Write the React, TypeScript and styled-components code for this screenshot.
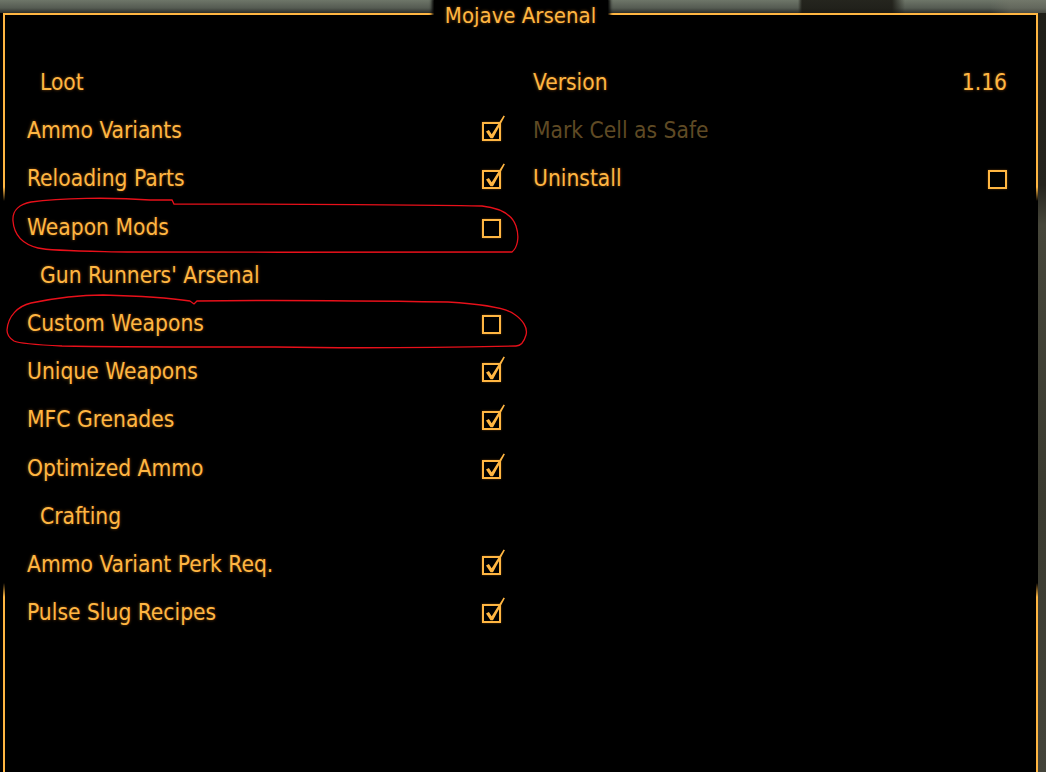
import React from 'react';
import styled, { createGlobalStyle } from 'styled-components';

const AMBER = '#ffb642';
const DIM = '#5f4a24';

const GlobalStyle = createGlobalStyle`
  html, body {
    margin: 0;
    padding: 0;
    background: #000;
  }
`;

const Page = styled.div`
  position: relative;
  width: 1046px;
  height: 772px;
  overflow: hidden;
  display: flex;
  flex-direction: column;
  font-family: 'DejaVu Sans Condensed', 'Liberation Sans Narrow', Roboto, sans-serif;
  font-stretch: condensed;
  background:
    linear-gradient(to right, transparent 0 798px, rgba(24, 23, 17, 0.85) 802px 892px, transparent 905px 990px, rgba(120, 122, 108, 0.4) 1010px) top / 100% 13px no-repeat,
    linear-gradient(#6e7669, #555b52 8px, #2b2d29 13px) top / 100% 13px no-repeat,
    linear-gradient(#1f1e18, #26251e 185px, #46463a 225px, #3a3a2f 500px, #44443a 772px) right / 8px 100% no-repeat,
    #000;
`;

const Frame = styled.section`
  position: relative;
  flex: 1;
  margin: 13px 8px 0 3px;
  border-top: 2px solid ${AMBER};
  background:
    linear-gradient(${AMBER} 0 172px, transparent 186px 568px, ${AMBER} 582px) left / 2px 100% no-repeat,
    linear-gradient(${AMBER} 0 172px, transparent 186px 568px, ${AMBER} 582px) right / 2px 100% no-repeat,
    #000;
`;

const TitleTab = styled.div`
  position: absolute;
  top: -15px;
  left: 50%;
  transform: translateX(-50%);
  width: 174px;
  height: 30px;
  display: flex;
  justify-content: center;
  align-items: center;
  background: #000;
  box-shadow: 0 0 3px 2px #000;
  color: ${AMBER};
  font-size: 22px;
  text-shadow: 0 0 3px rgba(255, 150, 30, 0.5);
`;

const Columns = styled.div`
  display: grid;
  grid-template-columns: 474px 474px;
  column-gap: 32px;
  padding: 43px 31px 0 24px;
`;

const Column = styled.div`
  display: flex;
  flex-direction: column;
`;

const Row = styled.div<{ $heading?: boolean }>`
  height: 48.2px;
  display: flex;
  align-items: center;
  justify-content: space-between;
  padding-left: ${(p) => (p.$heading ? '13px' : '0')};
`;

const Label = styled.span<{ $disabled?: boolean }>`
  color: ${(p) => (p.$disabled ? DIM : AMBER)};
  font-size: 22.6px;
  white-space: nowrap;
  text-shadow: ${(p) => (p.$disabled ? 'none' : '0 0 3px rgba(255, 150, 30, 0.5)')};
`;

const Box = styled.span`
  position: relative;
  width: 19px;
  height: 19px;
  box-sizing: border-box;
  border: 2px solid ${AMBER};
  margin-top: 3px;
  flex-shrink: 0;
  box-shadow: 0 0 2px rgba(255, 150, 30, 0.4);
`;

const Tick = styled.svg`
  position: absolute;
  left: -2px;
  top: -2px;
  overflow: visible;
`;

const Annotations = styled.svg`
  position: absolute;
  left: 0;
  top: 0;
  pointer-events: none;
`;

const Checkbox = ({ checked }: { checked: boolean }) => (
  <Box>
    {checked && (
      <Tick width="19" height="19" viewBox="0 0 19 19">
        <path
          d="M4 9.4 L6.9 7.9 L9.7 12.2 L21.6 -6.6 L22.9 -5.7 L11 16.2 L8.5 16.2 Z"
          fill={AMBER}
        />
      </Tick>
    )}
  </Box>
);

type Item =
  | { kind: 'heading'; text: string }
  | { kind: 'toggle'; text: string; checked: boolean };

const leftItems: Item[] = [
  { kind: 'heading', text: 'Loot' },
  { kind: 'toggle', text: 'Ammo Variants', checked: true },
  { kind: 'toggle', text: 'Reloading Parts', checked: true },
  { kind: 'toggle', text: 'Weapon Mods', checked: false },
  { kind: 'heading', text: "Gun Runners' Arsenal" },
  { kind: 'toggle', text: 'Custom Weapons', checked: false },
  { kind: 'toggle', text: 'Unique Weapons', checked: true },
  { kind: 'toggle', text: 'MFC Grenades', checked: true },
  { kind: 'toggle', text: 'Optimized Ammo', checked: true },
  { kind: 'heading', text: 'Crafting' },
  { kind: 'toggle', text: 'Ammo Variant Perk Req.', checked: true },
  { kind: 'toggle', text: 'Pulse Slug Recipes', checked: true },
];

const App = () => {
  return (
    <>
      <GlobalStyle />
      <Page>
        <Frame>
          <TitleTab>Mojave Arsenal</TitleTab>
          <Columns>
            <Column>
              {leftItems.map((item) =>
                item.kind === 'heading' ? (
                  <Row key={item.text} $heading>
                    <Label>{item.text}</Label>
                  </Row>
                ) : (
                  <Row key={item.text}>
                    <Label>{item.text}</Label>
                    <Checkbox checked={item.checked} />
                  </Row>
                )
              )}
            </Column>
            <Column>
              <Row>
                <Label>Version</Label>
                <Label>1.16</Label>
              </Row>
              <Row>
                <Label $disabled>Mark Cell as Safe</Label>
              </Row>
              <Row>
                <Label>Uninstall</Label>
                <Checkbox checked={false} />
              </Row>
            </Column>
          </Columns>
        </Frame>

        {/* hand-drawn red marks over the screenshot */}
        <Annotations width="1046" height="772" viewBox="0 0 1046 772">
          <path
            d="M13 221 C12 210 20 204 31 202 C60 198 110 197 150 200 L172 200 L174 204 C260 204 380 204 482 206 C500 208 512 214 516 226 C520 238 517 248 512 252 C420 253 250 252 127 252 C80 251 50 251 38 248 C22 244 14 234 13 221 Z"
            fill="none"
            stroke="#e8101a"
            strokeWidth="1.3"
          />
          <path
            d="M7 330 C8 316 18 306 31 303 C60 297 85 295 103 295 C140 296 170 298 190 301 L194 304 L197 301 C260 300 380 301 448 302 C480 304 505 307 514 314 C523 320 528 328 526 335 C524 342 520 346 516 346 C420 348 330 348 275 347 C200 347 110 347 62 346 C40 345 20 344 14 341 C9 338 7 335 7 330 Z"
            fill="none"
            stroke="#e8101a"
            strokeWidth="1.3"
          />
        </Annotations>
      </Page>
    </>
  );
};

export default App;
